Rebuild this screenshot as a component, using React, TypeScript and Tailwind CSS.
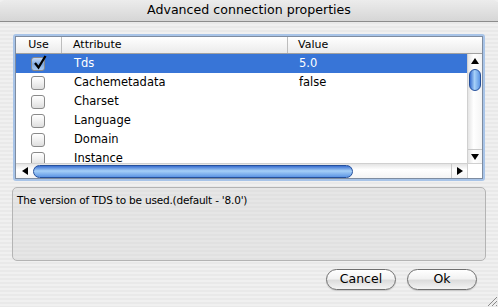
const rows = [
  { name: 'Tds', value: '5.0', checked: true },
  { name: 'Cachemetadata', value: 'false' },
  { name: 'Charset', value: '' },
  { name: 'Language', value: '' },
  { name: 'Domain', value: '' },
  { name: 'Instance', value: '' },
];

function Checkbox({ checked }: { checked?: boolean }) {
  return (
    <div
      className={`relative h-[14px] w-[14px] rounded-[3px] border border-[#8a8a8a] ${
        checked
          ? 'bg-[linear-gradient(180deg,#c9dcf5,#7fa9e0_50%,#a9c9f0)]'
          : 'bg-[linear-gradient(180deg,#ffffff,#f0f0f0_50%,#dedede)]'
      }`}
    >
      {checked && (
        <svg viewBox="0 0 14 14" className="absolute -top-[4px] left-[1px] h-[16px] w-[14px]">
          <path d="M2 8 L5.5 12.5 L12.5 1" fill="none" stroke="#000" strokeWidth="2.3" />
        </svg>
      )}
    </div>
  );
}

function Button({ label }: { label: string }) {
  return (
    <button className="flex h-[21px] w-[70px] items-center justify-center rounded-full border border-[#6f6f6f] bg-[linear-gradient(180deg,#ffffff,#f2f2f2_45%,#dcdcdc_55%,#f4f4f4)] text-[12.5px] text-black shadow-[0_1px_1px_rgba(0,0,0,0.15)]">
      {label}
    </button>
  );
}

export default function App() {
  return (
    <div
      className="flex h-[307px] w-[498px] flex-col overflow-hidden bg-[repeating-linear-gradient(180deg,#f0f0f0_0px,#f0f0f0_2px,#e9e9e9_2px,#e9e9e9_4px)] text-black"
      style={{ fontFamily: '"DejaVu Sans", "Liberation Sans", sans-serif' }}
    >
      {/* title bar */}
      <div className="flex h-[22px] items-center justify-center rounded-t-[5px] border-b border-[#8c8c8c] bg-[linear-gradient(180deg,#ececec,#d6d6d6)] text-[12.6px]">
        Advanced connection properties
      </div>

      {/* table */}
      <div className="mx-[13px] mt-[12px] rounded-[3px] bg-[#a8c4e8] p-[2px]">
        <div className="flex flex-col border border-[#7e8ca0] bg-white">
          <div className="flex h-[17px] border-b border-[#a0a0a0] bg-[linear-gradient(180deg,#ffffff,#ebebeb)] text-[11px]">
            <div className="flex w-[46px] items-center justify-center border-r border-[#bdbdbd]">Use</div>
            <div className="flex w-[226px] items-center border-r border-[#bdbdbd] pl-[11px]">Attribute</div>
            <div className="flex flex-1 items-center pl-[10px]">Value</div>
          </div>
          <div className="flex h-[109px]">
            <div className="flex-1 overflow-hidden text-[11.5px]">
              {rows.map((r) => (
                <div
                  key={r.name}
                  className={`flex h-[19px] shrink-0 items-center ${r.checked ? 'bg-[#3875d7] text-white' : ''}`}
                >
                  <div className="flex w-[47px] justify-start pl-[15px]">
                    <Checkbox checked={r.checked} />
                  </div>
                  <div className="w-[226px] pl-[11px]">{r.name}</div>
                  <div className="flex-1 pl-[10px]">{r.value}</div>
                </div>
              ))}
            </div>
            {/* vertical scrollbar */}
            <div className="flex w-[15px] flex-col border-l border-[#d0d0d0] bg-[linear-gradient(90deg,#e4e4e4,#ffffff_40%,#f4f4f4)]">
              <div className="flex h-[14px] items-center justify-center">
                <div className="h-0 w-0 border-x-[4px] border-b-[6px] border-x-transparent border-b-black" />
              </div>
              <div className="mx-[1px] mt-[1px] h-[22px] rounded-full border border-[#24509c] bg-[linear-gradient(90deg,#3a6fd0,#a6d0f8_45%,#5c95e4)]" />
              <div className="flex-1" />
              <div className="flex h-[14px] items-center justify-center border-t border-[#c8c8c8]">
                <div className="h-0 w-0 border-x-[4px] border-t-[6px] border-x-transparent border-t-black" />
              </div>
            </div>
          </div>
          {/* horizontal scrollbar */}
          <div className="flex h-[15px]">
            <div className="flex flex-1 items-center border-t border-[#d0d0d0] bg-[linear-gradient(180deg,#e4e4e4,#ffffff_40%,#f4f4f4)]">
              <div className="flex w-[17px] items-center justify-center">
                <div className="h-0 w-0 border-y-[4px] border-r-[6px] border-y-transparent border-r-black" />
              </div>
              <div className="h-[13px] w-[320px] rounded-full border border-[#24509c] bg-[linear-gradient(180deg,#3a6fd0,#a6d0f8_45%,#5c95e4)]" />
              <div className="flex-1" />
              <div className="flex h-full w-[16px] items-center justify-center border-l border-[#c8c8c8]">
                <div className="h-0 w-0 border-y-[4px] border-l-[6px] border-y-transparent border-l-black" />
              </div>
            </div>
            <div className="w-[15px] border-l border-t border-[#d0d0d0] bg-white" />
          </div>
        </div>
      </div>

      {/* description */}
      <div className="mx-[12px] mt-[6px] h-[74px] rounded-[5px] border border-[#b4b4b4] bg-[repeating-linear-gradient(180deg,#e6e6e6_0px,#e6e6e6_2px,#e1e1e1_2px,#e1e1e1_4px)] px-[4px] pt-[5px] text-[10.5px] tracking-[-0.2px]">
        The version of TDS to be used.(default - '8.0')
      </div>

      {/* buttons */}
      <div className="mr-[21px] mt-[8px] flex justify-end gap-[11px]">
        <Button label="Cancel" />
        <Button label="Ok" />
      </div>

      <div className="flex flex-1 items-end justify-end">
        <svg viewBox="0 0 13 13" className="h-[13px] w-[13px]">
          <path d="M12 3 L3 12 M12 7 L7 12 M12 11 L11 12" stroke="#8a8a8a" strokeWidth="1" />
        </svg>
      </div>
    </div>
  );
}
